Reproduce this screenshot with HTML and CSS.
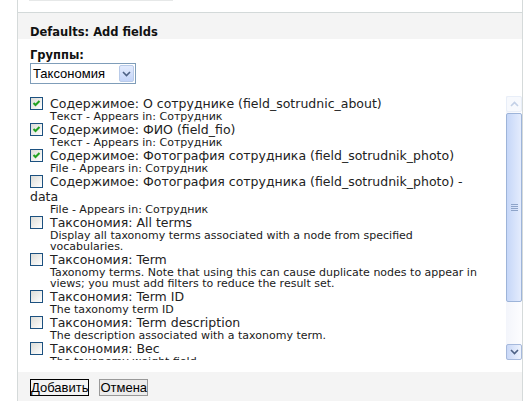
FILE: index.html
```html
<!DOCTYPE HTML>
<html>

<head>
	<meta http-equiv="Content-Type" content="text/html; charset=utf-8">
	<title>Defaults: Add fields</title>
	<link rel="stylesheet" href="styles.css">
</head>

<body>

	<div class="page">
		<div class="page-top">
			<div class="prev-tab"></div>
		</div>

		<div class="fieldset">
			<h2 class="fieldset-title">Defaults: Add fields</h2>

			<div class="fieldset-body">
				<div class="form-item">
					<label class="form-label">Группы:</label>
					<div class="select">
						<span class="select-value">Таксономия</span>
						<span class="select-btn">
							<svg width="9" height="6" viewBox="0 0 9 6"><path d="M1 1l3.5 3.5L8 1" fill="none" stroke="#4d6185" stroke-width="1.6"/></svg>
						</span>
					</div>
				</div>

				<div class="options">
					<div class="options-list">
						<div class="option">
							<label><span class="check checked"></span>Содержимое: О сотруднике (field_sotrudnic_about)</label>
							<div class="description">Текст - Appears in: Сотрудник</div>
						</div>
						<div class="option">
							<label><span class="check checked"></span>Содержимое: ФИО (field_fio)</label>
							<div class="description">Текст - Appears in: Сотрудник</div>
						</div>
						<div class="option">
							<label><span class="check checked"></span>Содержимое: Фотография сотрудника (field_sotrudnik_photo)</label>
							<div class="description">File - Appears in: Сотрудник</div>
						</div>
						<div class="option">
							<label><span class="check"></span>Содержимое: Фотография сотрудника (field_sotrudnik_photo) - data</label>
							<div class="description">File - Appears in: Сотрудник</div>
						</div>
						<div class="option">
							<label><span class="check"></span>Таксономия: All terms</label>
							<div class="description">Display all taxonomy terms associated with a node from specified vocabularies.</div>
						</div>
						<div class="option">
							<label><span class="check"></span>Таксономия: Term</label>
							<div class="description">Taxonomy terms. Note that using this can cause duplicate nodes to appear in views; you must add filters to reduce the result set.</div>
						</div>
						<div class="option">
							<label><span class="check"></span>Таксономия: Term ID</label>
							<div class="description">The taxonomy term ID</div>
						</div>
						<div class="option">
							<label><span class="check"></span>Таксономия: Term description</label>
							<div class="description">The description associated with a taxonomy term.</div>
						</div>
						<div class="option">
							<label><span class="check"></span>Таксономия: Вес</label>
							<div class="description">The taxonomy weight field</div>
						</div>
					</div>

					<div class="scrollbar">
						<div class="sb-btn sb-up">
							<svg width="9" height="6" viewBox="0 0 9 6"><path d="M1 5l3.5-3.5L8 5" fill="none" stroke="#c3d0e6" stroke-width="1.6"/></svg>
						</div>
						<div class="sb-thumb"><span class="grip"></span></div>
						<div class="sb-track"></div>
						<div class="sb-btn sb-down">
							<svg width="9" height="6" viewBox="0 0 9 6"><path d="M1 1l3.5 3.5L8 1" fill="none" stroke="#4d6185" stroke-width="1.6"/></svg>
						</div>
					</div>
				</div>
			</div>

			<div class="actions">
				<button class="btn btn-default">Добавить</button>
				<button class="btn">Отмена</button>
			</div>
		</div>
	</div>

</body>

</html>
```

FILE: styles.css
```css
html,
body {
	height: 100%;
}

body {
	margin: 0;
	background: #fff;
	color: #222;
	font-family: "DejaVu Sans", Verdana, sans-serif;
}

h2 {
	margin: 0;
	padding: 0;
}

.page {
	display: flex;
	flex-direction: column;
	min-height: 100%;
	margin-left: 17px;
	width: 504px;
	border-left: 1px solid #d5dada;
	border-right: 1px solid #d5dada;
}

/* край предыдущего блока */
.page-top {
	height: 12px;
	padding-left: 11px;
}

.prev-tab {
	width: 144px;
	height: 1px;
	background: #e6e8e8;
}

.fieldset {
	flex: 1;
	display: flex;
	flex-direction: column;
	border-top: 1px solid #d3d9d9;
}

.fieldset-title {
	height: 26px;
	box-sizing: border-box;
	padding: 13px 12px 0;
	background: #f4f4f4;
	font-size: 11.5px;
	line-height: 13px;
	font-weight: bold;
	color: #111;
}

.fieldset-body {
	padding: 10px 0 12px 12px;
}

.form-label {
	display: block;
	font-size: 11.5px;
	line-height: 13px;
	font-weight: bold;
	color: #111;
	margin-bottom: 1px;
}

/* выпадающий список */
.select {
	display: flex;
	align-items: center;
	justify-content: space-between;
	width: 106px;
	height: 21px;
	box-sizing: border-box;
	border: 1px solid #7f9db9;
	padding: 0 1px 0 2px;
	font-family: "Liberation Sans", Arial, sans-serif;
	font-size: 13px;
	color: #000;
}

.select-btn {
	display: flex;
	align-items: center;
	justify-content: center;
	width: 15px;
	height: 17px;
	box-sizing: border-box;
	border: 1px solid #b9cbe9;
	border-radius: 2px;
	background: linear-gradient(#e3ebfd, #c4d5f9);
}

/* список полей */
.options {
	display: flex;
	height: 264px;
	margin-top: 12px;
}

.options-list {
	flex: 1;
	overflow: hidden;
	padding-right: 24px;
}

.option label {
	display: block;
	font-size: 12.5px;
	line-height: 15px;
}

.check {
	display: inline-block;
	width: 13px;
	height: 13px;
	box-sizing: border-box;
	border: 1px solid #1c5180;
	background: linear-gradient(135deg, #dcdcd7, #fff);
	margin-right: 7px;
	vertical-align: -2px;
}

.check.checked {
	background: url("data:image/svg+xml,%3Csvg xmlns='http://www.w3.org/2000/svg' width='11' height='11'%3E%3Cpath d='M2.5 5l2 2 4-4' fill='none' stroke='%2321a121' stroke-width='2'/%3E%3C/svg%3E") no-repeat center, linear-gradient(135deg, #dcdcd7, #fff);
}

.description {
	margin-left: 20px;
	font-size: 11px;
	line-height: 11px;
	color: #1a1a1a;
}

/* полоса прокрутки */
.scrollbar {
	display: flex;
	flex-direction: column;
	width: 16px;
	background: linear-gradient(90deg, #f3f5fb, #fdfdff);
}

.sb-btn {
	display: flex;
	align-items: center;
	justify-content: center;
	height: 16px;
	box-sizing: border-box;
	border-radius: 2px;
}

.sb-up {
	border: 1px solid #e8eef8;
	background: #f7f9fd;
}

.sb-down {
	border: 1px solid #a6b9dc;
	background: linear-gradient(90deg, #c9d8f7, #eef3fe);
}

.sb-thumb {
	display: flex;
	align-items: center;
	justify-content: center;
	height: 189px;
	margin-top: 1px;
	box-sizing: border-box;
	border: 1px solid #9db4d9;
	border-radius: 2px;
	background: linear-gradient(90deg, #c6d7f8, #e4ecfd);
}

.grip {
	width: 7px;
	height: 7px;
	background: repeating-linear-gradient(#8ea4c9 0 1px, transparent 1px 2px);
}

.sb-track {
	flex: 1;
}

/* кнопки */
.actions {
	flex: 1;
	display: flex;
	align-items: flex-start;
	gap: 10px;
	background: #f4f4f4;
	padding: 7px 12px 0;
}

.btn {
	height: 17px;
	box-sizing: border-box;
	padding: 0;
	margin: 0;
	border: 1px solid #999;
	background: #ececec;
	font-family: "Liberation Sans", Arial, sans-serif;
	font-size: 13px;
	line-height: 15px;
	color: #000;
}

.btn-default {
	border-color: #000;
	background: #f4f4f4;
}
```
